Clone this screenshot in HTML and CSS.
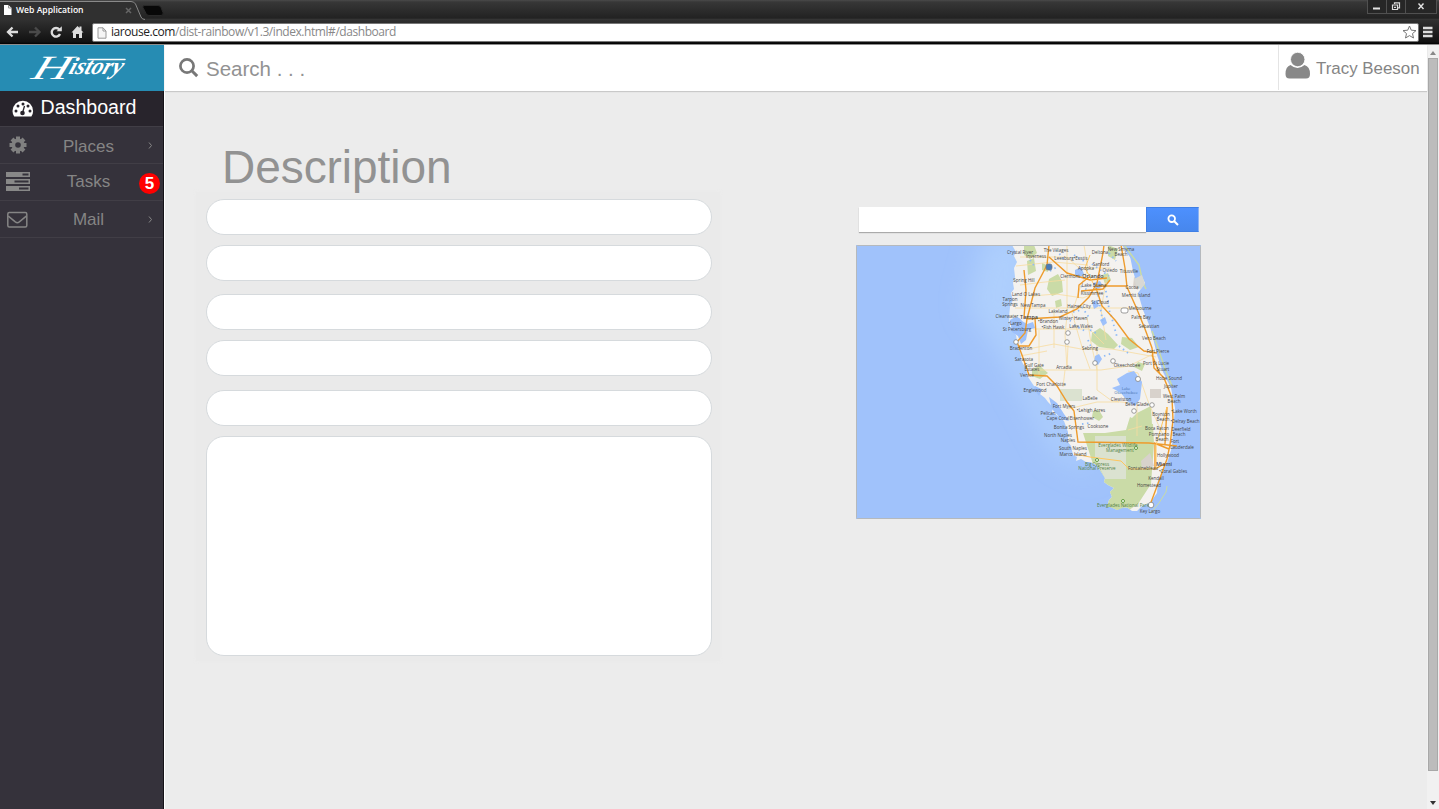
FILE: index.html
```html
<!DOCTYPE html>
<html lang="en">
<head>
<meta charset="utf-8">
<title>Web Application</title>
<link rel="stylesheet" href="styles.css">
</head>
<body>
<div class="browser">
  <div class="tabs">
    <svg class="tabshape" width="170" height="20" viewBox="0 0 170 20"><path d="M0 1.500H131Q134 1.500 135.500 4L141 17Q142 20 145 20H0z" fill="#303030"/><path d="M0 1.500H131Q134 1.500 135.500 4L141 17Q142 19.500 145 19.500" fill="none" stroke="#898989"/><path d="M144 5.500h14q2 0 3 2l2 5q1 3-2 3h-12q-2 0-3-2l-3-6q-.5-2 1-2z" fill="#080808" stroke="#292929"/></svg>
    <div class="tab">
      <svg width="9" height="12" viewBox="0 0 9 12"><path d="M1 1h4.500l3 3v7H1z" fill="#fff"/><path d="M5.500 1v3h3" fill="none" stroke="#999"/></svg>
      <span class="tabtitle">Web Application</span>
      <svg class="close" width="7" height="7" viewBox="0 0 7 7"><path d="M1 1l5 5M6 1l-5 5" stroke="#666" stroke-width="1.500"/></svg>
    </div>
    <div class="wins">
      <span class="win"><svg width="10" height="9"><path d="M1 6.500h7" stroke="#e3e3e3" stroke-width="2"/></svg></span>
      <span class="win"><svg width="10" height="9"><path d="M3.500 2V.8h5v5H7M1.500 3h5v4.500h-5zM3 5.300h2" fill="none" stroke="#ddd" stroke-width="1.200"/></svg></span>
      <span class="win winx"><svg width="10" height="9"><path d="M2.500 1.500l5 5.500M7.500 1.500l-5 5.500" stroke="#e3e3e3" stroke-width="1.400"/></svg></span>
    </div>
  </div>
  <div class="toolbar">
    <svg class="nav" width="86" height="22" viewBox="0 0 86 22"><g fill="none" stroke="#ddd" stroke-width="2.300"><path d="M18 10H8M12.500 5.500L8 10l4.500 4.500"/><path d="M29 10h9M35 5.500l4.500 4.500-4.500 4.500" stroke="#4a4a4a"/><path d="M59.300 7.500A4.300 4.300 0 1 0 60 12"/></g><path d="M56.500 9.200h5.300V4.300z" fill="#ddd"/><path d="M71.500 10.500L77.500 4l2 2V4.500h2v4l2 2h-1.500V16h-3v-4h-3v4h-3v-5.500z" fill="#ddd"/></svg>
    <div class="address">
      <svg width="10" height="12" viewBox="0 0 10 12"><path d="M1 .8h5L9 4v7.200H1zM6 .8V4h3" fill="#f5f5f5" stroke="#999"/></svg>
      <span class="url"><b>iarouse.com</b>/dist-rainbow/v1.3/index.html#/dashboard</span>
      <svg class="star" width="15" height="14" viewBox="0 0 15 14"><path d="M7.500 1l1.800 4.200 4.700.4-3.500 3 1 4.400-4-2.400-4 2.400 1-4.400L1 5.600l4.700-.4z" fill="none" stroke="#777"/></svg>
    </div>
    <svg class="burger" width="12" height="12"><path d="M1 2h9.500M1 6h9.500M1 10h9.500" stroke="#ddd" stroke-width="2.300"/></svg>
  </div>
</div>
<div class="app">
  <nav class="sidebar">
    <div class="logo">
      <svg width="164" height="46" viewBox="0 45 164 46"><g transform="translate(0 76) skewX(-20)"><text class="logotext" x="31" y="3"><tspan class="cap" textLength="37" lengthAdjust="spacingAndGlyphs">H</tspan><tspan class="rest" x="67" y="-2" textLength="53" lengthAdjust="spacingAndGlyphs">istory</tspan></text></g><path d="M88 59.500H125" fill="none" stroke="#fff" stroke-width="1.500" stroke-linecap="round"/></svg>
    </div>
    <div class="item active">
      <svg class="ico" width="24" height="20" viewBox="0 0 24 20"><path d="M1.500 12a10.300 10.300 0 0 1 20.600 0q0 3-1.700 5.500H3.200Q1.500 15 1.500 12z" fill="#fff"/><g fill="#28242c"><circle cx="5" cy="12" r="1.500"/><circle cx="7" cy="7" r="1.500"/><circle cx="12" cy="5" r="1.500"/><circle cx="17" cy="7" r="1.500"/><circle cx="19" cy="12" r="1.500"/><circle cx="11.500" cy="14" r="2.300"/></g><path d="M11.500 14l2-7" stroke="#28242c" stroke-width="1.300"/></svg>
      <span class="label">Dashboard</span>
    </div>
    <div class="item">
      <svg class="ico" width="20" height="20" viewBox="-10 -10 20 20"><g stroke="#808080" stroke-width="4"><path d="M0-8.500v17M-8.500 0h17M-6-6L6 6M6-6L-6 6"/></g><circle r="6.500" fill="#808080"/><circle r="2.800" fill="#35323b"/></svg>
      <span class="label">Places</span><svg class="chev" width="5" height="8"><path d="M1 1.500l2.500 3L1 7.500" fill="none" stroke="#888"/></svg>
    </div>
    <div class="item tasks">
      <svg class="ico" width="26" height="22" viewBox="0 0 26 22"><path d="M0 1h24v5H0zM0 8h24v5H0zM0 15h24v5H0z" fill="#888"/><path d="M16.500 2.500h6v2h-6zM8.500 9.500h14v2h-14zM13 16.500h9.500v2H13z" fill="#35323b"/></svg>
      <span class="label">Tasks</span><span class="badge">5</span>
    </div>
    <div class="item mail">
      <svg class="ico" width="22" height="18" viewBox="0 0 22 18"><rect x="1.800" y="2.500" width="19" height="14.500" rx="1.500" fill="none" stroke="#858585" stroke-width="1.500"/><path d="M2.300 6.200l7 5.700q2 1.500 4 0l7-5.700" fill="none" stroke="#858585" stroke-width="1.500"/></svg>
      <span class="label">Mail</span><svg class="chev" width="5" height="8"><path d="M1 1.500l2.500 3L1 7.500" fill="none" stroke="#888"/></svg>
    </div>
  </nav>
  <div class="page">
    <header class="top">
      <svg class="searchico" width="20" height="20" viewBox="0 0 20 20"><circle cx="8" cy="8" r="6.600" fill="none" stroke="#777" stroke-width="2.700"/><path d="M12.800 12.800l5.400 5.300" stroke="#777" stroke-width="3"/></svg>
      <span class="search">Search . . .</span>
      <div class="user">
        <svg width="26" height="28" viewBox="0 0 26 28"><path d="M5.500 13Q12.500 19 19.500 13Q25 14.500 25 22q0 4.500-4 4.500H4.500Q.5 26.500.5 22q0-7.500 5-9z" fill="#888"/><circle cx="12.700" cy="7.500" r="7.200" fill="#888" stroke="#fff" stroke-width=".8"/></svg>
        <span>Tracy Beeson</span>
      </div>
    </header>
    <main class="content">
      <section class="form">
        <h1>Description</h1>
        <div class="fields">
          <div class="field"></div><div class="field f2"></div><div class="field f3"></div><div class="field f4"></div><div class="field f5"></div><div class="area"></div>
        </div>
      </section>
      <section class="places">
        <div class="finder"><div class="query"></div><div class="go"><svg width="12" height="12" viewBox="0 0 12 12"><circle cx="4.700" cy="4.700" r="3.300" fill="none" stroke="#fff" stroke-width="1.800"/><path d="M7 7l4 4" stroke="#fff" stroke-width="2"/></svg></div></div>
        <svg class="map" width="345" height="274" viewBox="856 245 345 274">
          <defs>
            <filter id="shelf" x="-50%" y="-50%" width="200%" height="200%"><feGaussianBlur stdDeviation="13"/></filter>
            <clipPath id="land"><path d="M1012 245L1016 252 1014 256 1017 262 1014 268 1015 277 1013 283 1014 289 1011 293 1013 300 1010 307 1009 317 1010 327 1016 335 1018 347 1020 352 1022 362 1026 369 1028 377 1034 386 1042 389 1040 394 1045 398 1048 402 1053 407 1052 412 1058 416 1064 421 1068 432 1068 442 1071 446 1073 455 1077 457 1076 461 1081 459 1086 462 1090 462 1097 465 1100 470 1105 478 1104 482 1108 485 1114 488 1110 492 1112 497 1109 500 1107 507 1111 507 1117 510 1122 507 1128 508 1132 511 1137 511 1142 506 1150 503 1157 493 1158 480 1167 463 1172 447 1173 432 1175 408 1171 388 1163 372 1157 355 1153 338 1150 327 1143 310 1138 293 1145 283 1137 267 1127 253 1122 245z"/></clipPath>
          </defs>
          <rect x="856" y="245" width="345" height="274" fill="#a0c2fb"/>
          <path d="M985 235h50l-14 90 25 70 50 80-40-20-50-90-40-60z" fill="#aecffd" filter="url(#shelf)"/>
          <g clip-path="url(#land)">
            <rect x="1000" y="245" width="190" height="270" fill="#f4f2ef"/>
            <g fill="#cadba7">
              <path d="M1024 245h10l3 8-7 6-6-4zM1027 261l7-3 2 13-8 4zM1042 263l5 2 1 7-6-2zM1049 279l9-5 4 7 1 11-11 4-5-7zM1055 301l6-2 1 7-6 2zM1092 333l8-5 8 6 10 11-4 4-15-2-8-6zM1122 337l10 1 7 9-9 3-9-6zM1102 275l6-2 3 7-6 4zM1032 369l8-3 8 7-8 6-8-3zM1138 362l7 2-3 7-8-4zM1093 411l6-1 4 7-4 4-7-4zM1108 245l10 4-3 11-7-4zM1083 433h22l21-3 4-13 11 6 12 1 1 20-3 40-13 20-15 10-20-8 4-12-10-13-5-20z"/>
              <path d="M1129 421l8-8 14-7 2 38-9 14-17 0z"/>
            </g>
            <path d="M1060 389h22v12h-22zM1095 436h31v43h-21l-10-22z" fill="#dbe2d0"/>
            <path d="M1150 389h11v9h-11zM1141 461l9-8 4 13-12 4zM1134 277l6 3-2 10-5-3z" fill="#d8d2cc"/>
            <g fill="none" stroke="#f7dca0" stroke-width=".8">
              <path d="M1020 257h47l12 11h32M1020 285l25-3 20-2M1032 296l24-2 27 4 18-8M1015 308h130M1033 329h56l15 15M1067 245v71l-2 18 2 36M1084 245l4 24-7 16-9 28 10 34 8 22M1037 370h64l28-4 30-15M1065 370l-2 17M1097 345v45l15 11 18 2M1028 349l26-5 27 5h31l44 8M1054 312v36M1087 317l4 26 6 27M1107 276l-6 34 5 30M1128 371l10 2 11 31 14 31M1068 409l29-7h22M1020 356l27-5M1068 345l-1 22M1016 266l37-4 35 3M1039 330v47M1137 404v32M1128 430l14-4"/>
            </g>
          </g>
          <g fill="#9ec1fb">
            <path d="M1010 320q8-6 12 1l5 3 6-2 2 6-7 2-2 10-5 4-3-8-6-4zM1035 386l7 4-3 6-5-7zM1049 397l8 6 7 11 5 7-8-2-9-10zM1127 373l7-2 8 11-2 17-5 7-7-4-7-9-9-5 8-3-3-6zM1095 356l4-2 3 5-4 6-4-3zM1075 270l6-3 3 7-4 4-5-2zM1093 283l7-2 3 5-7 4zM1092 302l5-2 2 6-5 3zM1100 320l5-3 2 6-4 3zM1139 254l-10-3 4 20 5 17 4-1z"/>
          </g>
          <g fill="none" stroke="#8fbbf6" stroke-width="1.800" stroke-dasharray="1.500 3.500"><path d="M1030 260l5 7M1056 250l9 10M1074 255l13 8M1081 286l8 5M1092 264l17 12M1109 253l7 8M1082 307l8 12M1098 295l5 28M1105 286l5 28M1073 312l8-2M1074 325l11 6M1090 330l8 4M1111 315l6 22M1119 346l9 7M1065 319l6 2M1050 271l7-4M1088 340l4 9M1104 356l9-3M1082 424l8-1"/></g>
          <g fill="none" stroke="#c9dba5" stroke-width="1.500"><path d="M1124 245l15 20 4 18 3 6M1152 331l5 14 8 24 7 17M1109 506l9 3 7-3"/><path d="M1150 514l9-11 7-11 1-6" stroke-width="1"/></g>
          <path d="M1134 279l8-4 3 9-4 5-4-1z" fill="#d8d8d4"/>
          <g fill="none" stroke="#ee9b2c" stroke-width="1.400">
            <path d="M1049 245l-2 20-12 23-8 31-2 14-8 9 5 13 7 20 18 1 10 10 10 16 7 9 4 31 71 1 28 3M1049 257l18 16 23 7 17-2M1024 270l2 20-2 28M1026 319l34-2 17-8 12-12 8-14 6-30 1-8M1035 318l1 17-7 11h-11M1078 298l1-13 10-8M1081 291l22-2 7-9M1096 286h30M1096 288l6 18 13 14 14 19 15 12 13 2M1121 245l4 23 2 19 9 20 9 22 7 19 2 20 10 10 8 20 1 22-3 25-3 14-11 30-6 16M1167 407l-2 37M1154 443l15 6M1155 444v25l9-5M1152 355l8 19"/>
          </g>
          <g fill="none" stroke="#ffc65e" stroke-width="1"><path d="M1074 454l16 3 31 4 8 8h27M1167 407l-11 38v22M1090 255l-5 13 8 15"/></g>
          <g class="shield"><rect x="1046" y="264" width="6" height="6" rx="2" fill="#487cba"/><rect x="1121" y="308" width="7" height="5" rx="2"/><circle cx="1068" cy="333" r="2.300"/><circle cx="1067" cy="342" r="2.300"/><circle cx="1113" cy="361" r="2.300"/><circle cx="1095" cy="363" r="2.300"/><circle cx="1138" cy="379" r="2.500"/><circle cx="1134" cy="411" r="2.300"/><circle cx="1152" cy="405" r="2.300"/><circle cx="1016" cy="342" r="2.300"/><circle cx="1151" cy="505" r="2.800"/></g>
          <g fill="#fff" stroke="#5e9b3d" stroke-width="1"><circle cx="1097" cy="460" r="1.500"/><circle cx="1123" cy="501" r="1.500"/><circle cx="1136" cy="448" r="1.500"/></g>
          <g class="places-text">
            <text x="1020" y="254">Crystal River</text><text x="1036" y="258">Inverness</text><text x="1056" y="252">The Villages</text><text x="1071" y="260">Leesburg&#8226;Eustis</text><text x="1100" y="254">Deltona</text><text x="1121" y="251">New Smyrna</text><text x="1121" y="256">Beach</text><text x="1086" y="270">Apopka</text><text x="1101" y="266">Sanford</text><text x="1110" y="272">Oviedo</text><text x="1129" y="273">Titusville</text><text x="1070" y="278">Clermont</text><text class="city" x="1093" y="278">Orlando</text><text x="1094" y="287">Lake Buena</text><text x="1092" y="295">Kissimmee</text><text x="1132" y="289">Cocoa</text><text x="1136" y="297">Merritt Island</text><text x="1024" y="282">Spring Hill</text><text x="1026" y="296">Land O Lakes</text><text x="1010" y="301">Tarpon</text><text x="1010" y="306">Springs</text><text x="1033" y="307">New Tampa</text><text x="1079" y="308">Haines City</text><text x="1100" y="304">St Cloud</text><text x="1058" y="313">Lakeland</text><text x="1007" y="318">Clearwater</text><text class="city" x="1029" y="319">Tampa</text><text x="1048" y="323">&#8226;Brandon</text><text x="1073" y="320">Winter Haven</text><text x="1140" y="310">Melbourne</text><text x="1141" y="319">Palm Bay</text><text x="1015" y="325">&#8226;Largo</text><text x="1017" y="331">St Petersburg</text><text x="1053" y="329">&#8226;Fish Hawk</text><text x="1081" y="328">Lake Wales</text><text x="1149" y="328">Sebastian</text><text x="1154" y="340">Vero Beach</text>
            <text x="1021" y="350">Bradenton</text><text x="1024" y="361">Sarasota</text><text x="1034" y="366.500">Gulf Gate</text><text x="1032" y="371">Estates</text><text x="1027" y="377">Venice</text><text x="1064" y="369">Arcadia</text><text x="1090" y="350">Sebring</text><text x="1127" y="367">Okeechobee</text><text x="1158" y="353">Fort Pierce</text><text x="1156" y="365">Port St Lucie</text><text x="1163" y="371">Stuart</text><text x="1169" y="380">Hobe Sound</text><text x="1171" y="388">Jupiter</text><text x="1174" y="398">West Palm</text><text x="1174" y="403">Beach</text><text x="1051" y="386">Port Charlotte</text><text x="1035" y="392">Englewood</text><text x="1126" y="390" class="water">Lake</text><text x="1126" y="394" class="water">Okeechobee</text><text x="1090" y="400">LaBelle</text><text x="1121" y="401">Clewiston</text><text x="1137" y="406">Belle Glade</text><text x="1064" y="408">Fort Myers</text><text x="1091" y="412">&#8226;Lehigh Acres</text><text x="1048" y="415">Pelican</text><text x="1058" y="420">Cape Coral</text><text x="1082" y="419.500">Eisenhower</text><text x="1069" y="429">Bonita Springs</text><text x="1098" y="428">Cooksone</text><text x="1161" y="416">Boynton</text><text x="1163" y="421">Beach</text><text x="1184" y="413">&#8226;Lake Worth</text><text x="1185" y="423">&#8226;Delray Beach</text><text x="1157" y="430">Boca Raton</text><text x="1181" y="431">Deerfield</text><text x="1179" y="436">Beach</text><text x="1058" y="437">North Naples</text><text x="1068" y="442">Naples</text><text x="1073" y="450">South Naples</text><text x="1073" y="456">Marco Island</text><text x="1159" y="436">Pompano</text><text x="1162" y="441">Beach</text><text x="1175" y="443">Fort</text><text x="1182" y="449">Lauderdale</text><text x="1168" y="457">Hollywood</text><text class="city" x="1164" y="466">Miami</text><text x="1173" y="473">&#8226;Coral Gables</text><text x="1143" y="470">Fontainebleau</text><text x="1156" y="480">Kendall</text><text x="1149" y="487">Homestead</text><text x="1150" y="513">Key Largo</text>
            <g fill="#528044"><text x="1118" y="447">Everglades Wildlife</text><text x="1120" y="452">Management</text><text x="1097" y="466">Big Cypress</text><text x="1097" y="470">National Preserve</text><text x="1123" y="507">Everglades National Park</text></g>
          </g>
          <rect x="856.500" y="245.500" width="344" height="273" rx="1" fill="none" stroke="#b5b9bd"/>
        </svg>
      </section>
    </main>
  </div>
  <div class="scroll"><i class="up"></i><div class="thumb"></div><i class="down"></i></div>
</div>
</body>
</html>
```
FILE: styles.css
```css
* { box-sizing: border-box; }
body { margin: 0; width: 1439px; height: 809px; overflow: hidden; display: flex; flex-direction: column; background: #ececec; font-family: "Liberation Sans", Arial, sans-serif; }
svg { display: block; flex: none; }
.browser { height: 45px; flex: none; background: #111; }
.tabs { height: 20px; display: flex; justify-content: space-between; background: linear-gradient(#4a4a4a 0, #373737 2px, #222 18px, #3a3a3a 20px); position: relative; }
.tabshape { position: absolute; left: 0; top: 0; }
.tab { position: relative; width: 136px; display: flex; align-items: center; padding-left: 3px; gap: 4px; }
.tabtitle { color: #fff; font: 600 8.6px/18px "Open Sans", "Noto Sans", sans-serif; white-space: nowrap; }
.close { margin-left: auto; margin-right: 4px; }
.wins { display: flex; height: 14px; margin-right: 2px; }
.win { width: 19px; border: 1px solid #505050; border-top: 0; border-right: 0; display: flex; align-items: center; justify-content: center; background: #262626; }
.winx { width: 32px; border-right: 1px solid #505050; }
.toolbar { height: 25px; display: flex; align-items: flex-start; padding-top: 2px; background: linear-gradient(#303030, #111 22px, #000); border-bottom: 1px solid #8d8d8d; }
.nav { margin-right: 6px; }
.address { width: 1327px; height: 19px; margin-top: 1px; background: #fff; border: 1px solid #777; border-radius: 2px; display: flex; align-items: center; padding: 0 1px 0 4px; }
.url { font: 12px/16px "Open Sans", "Noto Sans", sans-serif; color: #888; margin: -1px 0 0 4px; letter-spacing: -.44px; white-space: nowrap; }
.url b { font-weight: 400; color: #222; }
.star { margin: -1px 0 0 auto; }
.burger { margin: 4px 0 0 3px; }
.app { flex: 1; display: flex; min-height: 0; }
.sidebar { width: 164px; flex: none; background: #35323b; border-right: 1px solid #151318; }
.logo { height: 46px; width: 164px; background: #268cb3; position: relative; }
.logotext { font: italic 700 24px "Liberation Serif", serif; fill: #fff; }
.logotext .cap { font-size: 34px; font-weight: 400; }
.logotext .rest { font-size: 24px; }
.item { position: relative; height: 37px; display: flex; align-items: center; border-bottom: 1px solid #413e46; color: #858585; font-size: 17px; }
.item .ico { margin-left: 8px; }
.label { position: absolute; left: 14px; right: 0; text-align: center; line-height: 20px; top: 10px; }
.active { height: 36px; background: #28242c; color: #fff; font-size: 19.6px; }
.active .ico { margin-left: 11px; }
.active .label { top: 5px; line-height: 22px; }
.tasks .ico, .mail .ico { margin-left: 6px; }
.tasks .label { top: 8px; }
.mail .label { top: 9px; }
.chev { margin-left: auto; margin-right: 10px; }
.badge { margin: 3px 3px 0 auto; width: 21px; height: 21px; border-radius: 50%; background: #f00; color: #fff; font: 700 17px/21px "Liberation Sans", sans-serif; text-align: center; }
.page { flex: 1; border-left: 1px solid #fff; }
.top { height: 46px; background: #fff; box-shadow: 0 1px 1px #c9c9c9; display: flex; position: relative; padding-left: 14px; }
.searchico { margin-top: 13px; }
.search { margin-left: 7px; font-size: 20.5px; line-height: 24px; margin-top: 12px; color: #929292; }
.user { margin-left: auto; width: 149px; height: 45px; border-left: 1px solid #e4e4e4; display: flex; padding: 7px 0 0 6px; gap: 5px; color: #858585; font-size: 16.9px; line-height: 34px; white-space: nowrap; }
.content { display: flex; padding: 47px 0 0 31px; }
.form { width: 524px; }
.form h1 { margin: 0; padding-left: 26px; font-size: 46px; font-weight: 400; line-height: 58px; height: 54px; color: #929292; letter-spacing: -.05px; }
.fields { height: 469px; padding: 7px 8px 0 10px; background: #eaeaea; box-shadow: 0 0 5px #eaeaea; }
.field { height: 36px; background: #fff; border: 1px solid #d6dadd; border-radius: 18px; }
.f2, .f4 { margin-top: 10px; }
.f3 { margin-top: 13px; }
.f5 { margin-top: 14px; }
.area { margin-top: 10px; height: 220px; border: 1px solid #d6dadd; border-radius: 18px; background: #fff; }
.places { margin: 69px 0 0 136px; width: 345px; }
.finder { display: flex; height: 25px; margin: 0 2px 13px 3px; }
.query { flex: 1; background: #fff; box-shadow: 0 1px 1px #aaa; }
.go { width: 53px; background: linear-gradient(#4d90fe, #4787ed); border: 1px solid #3f7fe5; border-right-color: #8bb3f5; display: flex; align-items: center; justify-content: center; }
.shield { fill: #fff; stroke: #777; stroke-width: .7; }
.places-text { font: 4.5px "Open Sans", "Noto Sans", sans-serif; fill: #444; text-anchor: middle; }
.places-text .city { font-size: 5.4px; font-weight: 600; }
.places-text .water { fill: #426fae; font-size: 4px; }
.scroll { width: 12px; flex: none; background: #f1f1f1; display: flex; flex-direction: column; align-items: center; padding: 6px 0 4px; }
.thumb { width: 10px; height: 713px; margin: 3px 0 auto; background: #bcbcbc; border: 1px solid #a8a8a8; }
.up, .down { border: 3px solid transparent; border-top: 0; border-bottom: 4px solid #888; }
.down { border-top: 4px solid #333; border-bottom: 0; }
```
